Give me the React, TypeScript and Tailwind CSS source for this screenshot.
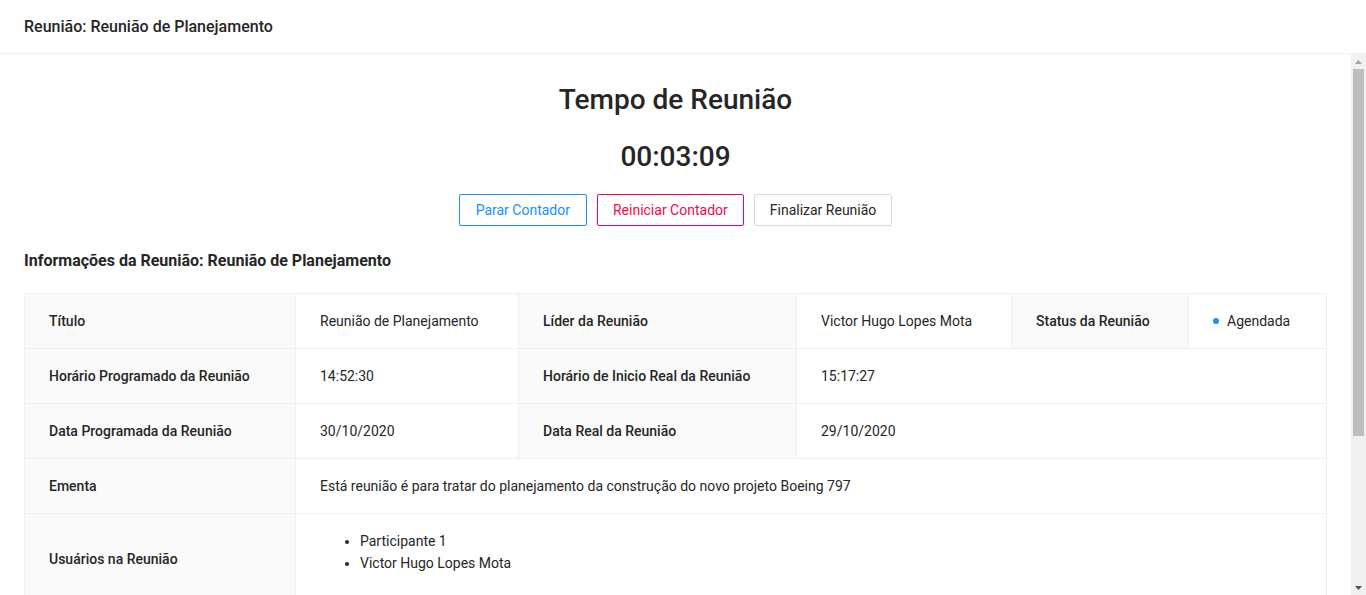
const participants = ["Participante 1", "Victor Hugo Lopes Mota"];

const label =
  "bg-[#fafafa] border border-[#f0f0f0] px-6 py-4 text-left align-middle font-medium text-[#262626] leading-[22px]";
const value =
  "border border-[#f0f0f0] px-6 py-4 text-left align-middle text-[#262626] leading-[22px]";

export default function App() {
  return (
    <div
      className="h-[595px] flex flex-col bg-white text-sm text-[#262626]"
      style={{ fontFamily: "Roboto, 'Liberation Sans', sans-serif" }}
    >
      {/* Header */}
      <header className="h-[54px] shrink-0 flex items-center px-6 border-b border-[#f0f0f0]">
        <h1 className="text-base font-medium text-[#262626]">
          Reunião: Reunião de Planejamento
        </h1>
      </header>

      <div className="flex-1 flex min-h-0">
        {/* Content */}
        <main className="flex-1 overflow-hidden px-6 pt-[27px]">
          <div className="flex flex-col items-center">
            <h2 className="text-[28px] leading-[38px] font-medium text-[#262626]">
              Tempo de Reunião
            </h2>
            <div className="mt-[19px] text-[28px] leading-[38px] font-medium text-[#262626]">
              00:03:09
            </div>
            <div className="mt-[18px] flex items-center gap-[10px]">
              <button className="h-8 px-4 rounded-[2px] border border-[#1890ff] text-[#1890ff] bg-white">
                Parar Contador
              </button>
              <button className="h-8 px-[15px] rounded-[2px] border border-[#f5084a] text-[#f5084a] bg-white">
                Reiniciar Contador
              </button>
              <button className="h-8 px-[15px] rounded-[2px] border border-[#d9d9d9] text-[#262626] bg-white">
                Finalizar Reunião
              </button>
            </div>
          </div>

          <h3 className="mt-[23px] text-base leading-6 font-bold text-[#262626]">
            Informações da Reunião: Reunião de Planejamento
          </h3>

          <table className="mt-[20px] w-full table-fixed border-collapse border border-[#f0f0f0]">
            <colgroup>
              <col className="w-[271px]" />
              <col className="w-[223px]" />
              <col className="w-[278px]" />
              <col className="w-[215px]" />
              <col className="w-[177px]" />
              <col />
            </colgroup>
            <tbody>
              <tr>
                <th className={label}>Título</th>
                <td className={value}>Reunião de Planejamento</td>
                <th className={label}>Líder da Reunião</th>
                <td className={value}>Victor Hugo Lopes Mota</td>
                <th className={label}>Status da Reunião</th>
                <td className={value}>
                  <div className="flex items-center h-[22px]">
                    <span className="w-[6px] h-[6px] rounded-full bg-[#1890ff]" />
                    <span className="ml-2">Agendada</span>
                  </div>
                </td>
              </tr>
              <tr>
                <th className={label}>Horário Programado da Reunião</th>
                <td className={value}>14:52:30</td>
                <th className={label}>Horário de Inicio Real da Reunião</th>
                <td className={value} colSpan={3}>
                  15:17:27
                </td>
              </tr>
              <tr>
                <th className={label}>Data Programada da Reunião</th>
                <td className={value}>30/10/2020</td>
                <th className={label}>Data Real da Reunião</th>
                <td className={value} colSpan={3}>
                  29/10/2020
                </td>
              </tr>
              <tr>
                <th className={label}>Ementa</th>
                <td className={value} colSpan={5}>
                  Está reunião é para tratar do planejamento da construção do
                  novo projeto Boeing 797
                </td>
              </tr>
              <tr>
                <th className={label}>Usuários na Reunião</th>
                <td className={value} colSpan={5}>
                  <ul className="list-disc pl-10 mb-[14px]">
                    {participants.map((p) => (
                      <li key={p}>{p}</li>
                    ))}
                  </ul>
                </td>
              </tr>
            </tbody>
          </table>
        </main>

        {/* Scrollbar */}
        <div className="w-[15px] shrink-0 flex flex-col bg-[#f1f1f1]" aria-hidden>
          <div className="h-[15px] flex items-center justify-center">
            <svg width="7" height="4" viewBox="0 0 7 4">
              <path d="M3.5 0L7 4H0z" fill="#a3a3a3" />
            </svg>
          </div>
          <div className="flex-1 px-[2px]">
            <div className="h-[367px] bg-[#bebebe]" />
          </div>
          <div className="h-[15px] flex items-center justify-center">
            <svg width="7" height="4" viewBox="0 0 7 4">
              <path d="M0 0H7L3.5 4z" fill="#505050" />
            </svg>
          </div>
        </div>
      </div>
    </div>
  );
}
